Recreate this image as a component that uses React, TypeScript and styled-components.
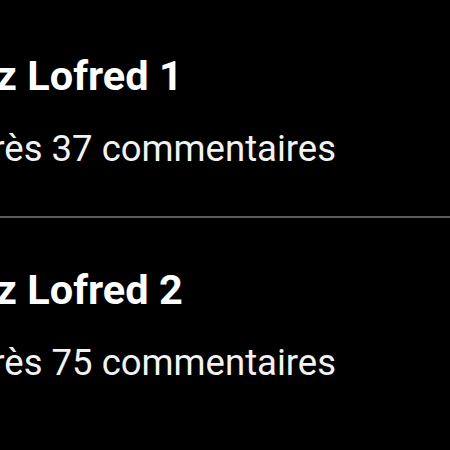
import styled, { createGlobalStyle } from "styled-components";

const Global = createGlobalStyle`
  html, body {
    margin: 0;
    padding: 0;
    background: #000;
    overflow: hidden;
  }
  body {
    font-family: Roboto, "Noto Sans", sans-serif;
  }
`;

const List = styled.div`
  display: flex;
  flex-direction: column;
  width: 450px;
  padding-top: 4px;
  overflow: hidden;
`;

const Item = styled.div<{ $divider?: boolean }>`
  display: flex;
  flex-direction: column;
  gap: 27px;
  padding: 48px 0 46px;
  margin-left: -52px;
  width: 502px;
  border-bottom: ${(p) => (p.$divider ? "2px solid #5c5c5c" : "none")};
`;

const Title = styled.div`
  color: #fff;
  font-size: 41.5px;
  font-weight: 700;
  line-height: 48px;
  margin-left: -15px;
  white-space: nowrap;
`;

const Meta = styled.div`
  color: #f2f2f2;
  font-size: 36.5px;
  font-weight: 400;
  line-height: 43px;
  white-space: nowrap;
`;

const quizzes = [
  { name: "Quiz Lofred 1", comments: 37 },
  { name: "Quiz Lofred 2", comments: 75 },
];

export default function App() {
  return (
    <>
      <Global />
      <List>
        {quizzes.map((q, i) => (
          <Item key={q.name} $divider={i < quizzes.length - 1}>
            <Title>{q.name}</Title>
            <Meta>Après {q.comments} commentaires</Meta>
          </Item>
        ))}
      </List>
    </>
  );
}
